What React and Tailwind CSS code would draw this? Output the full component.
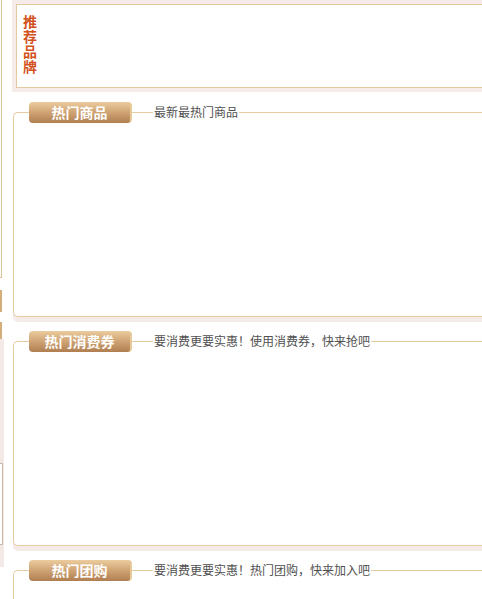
import React from 'react'

const LINE = 'bg-[#e6cba3]'

const Section = ({ title, desc, first }) => (
  <div className={first ? 'ml-[1px] mt-[10px]' : 'ml-[1px] mt-[14px]'}>
    {/* header row: corner, badge, line, note, line */}
    <div className="flex h-[21px] items-center">
      <div className="h-[11px] w-[16px] self-end rounded-tl-[5px] border-l border-t border-[#e6cba3]" />
      <div className="flex h-[21px] w-[103px] items-center justify-center rounded-[4px] border-r-2 border-[#e8c99a] bg-gradient-to-b from-[#ebcc9e] via-[#cfa374] to-[#b07f51] text-[14px] font-bold leading-none text-white">
        {title}
      </div>
      <div className={`h-px w-[21px] ${LINE}`} />
      <span className="px-[1px] text-[12px] leading-none text-[#505050]">{desc}</span>
      <div className={`h-px flex-1 ${LINE}`} />
    </div>
    <div className="h-[194px] rounded-bl-[5px] border-b border-l border-[#e6cba3] bg-white shadow-[0_5px_0_#f4ebe8]" />
  </div>
)

export default function App() {
  return (
    <div
      className="flex h-[599px] w-[482px] overflow-hidden bg-white"
      style={{ fontFamily: '"Liberation Sans", "Noto Sans CJK SC", sans-serif' }}
    >
      {/* clipped edge of the left sidebar */}
      <div className="flex w-[4px] shrink-0 flex-col">
        <div className="h-[278px] w-[2px] border-r border-b border-[#dcc096]" />
        <div className="mt-[12px] h-[22px] w-[2px] bg-[#d2ae7c]" />
        <div className="mt-[10px] h-[17px] w-[2px] bg-[#d2ae7c]" />
        <div className="h-[228px] w-[4px] bg-[#f3e9e6] pt-[124px]">
          <div className="h-[82px] w-[3px] border border-l-0 border-[#c9b8a8] bg-white" />
        </div>
      </div>

      <div className="ml-[8px] flex min-w-0 flex-1 flex-col">
        {/* 推荐品牌 */}
        <div className="h-[92px] bg-[#f5ece9] py-[4px] pl-[4px]">
          <div className="h-[84px] border border-r-0 border-[#e3c9a0] bg-white pl-[6px] pt-[10px]">
            <div className="w-[15px] text-[14px] font-bold leading-[15px] text-[#d2521d]">推荐品牌</div>
          </div>
        </div>

        <Section first title="热门商品" desc="最新最热门商品" />
        <Section title="热门消费券" desc="要消费更要实惠！使用消费券，快来抢吧" />
        <Section title="热门团购" desc="要消费更要实惠！热门团购，快来加入吧" />
      </div>
    </div>
  )
}
